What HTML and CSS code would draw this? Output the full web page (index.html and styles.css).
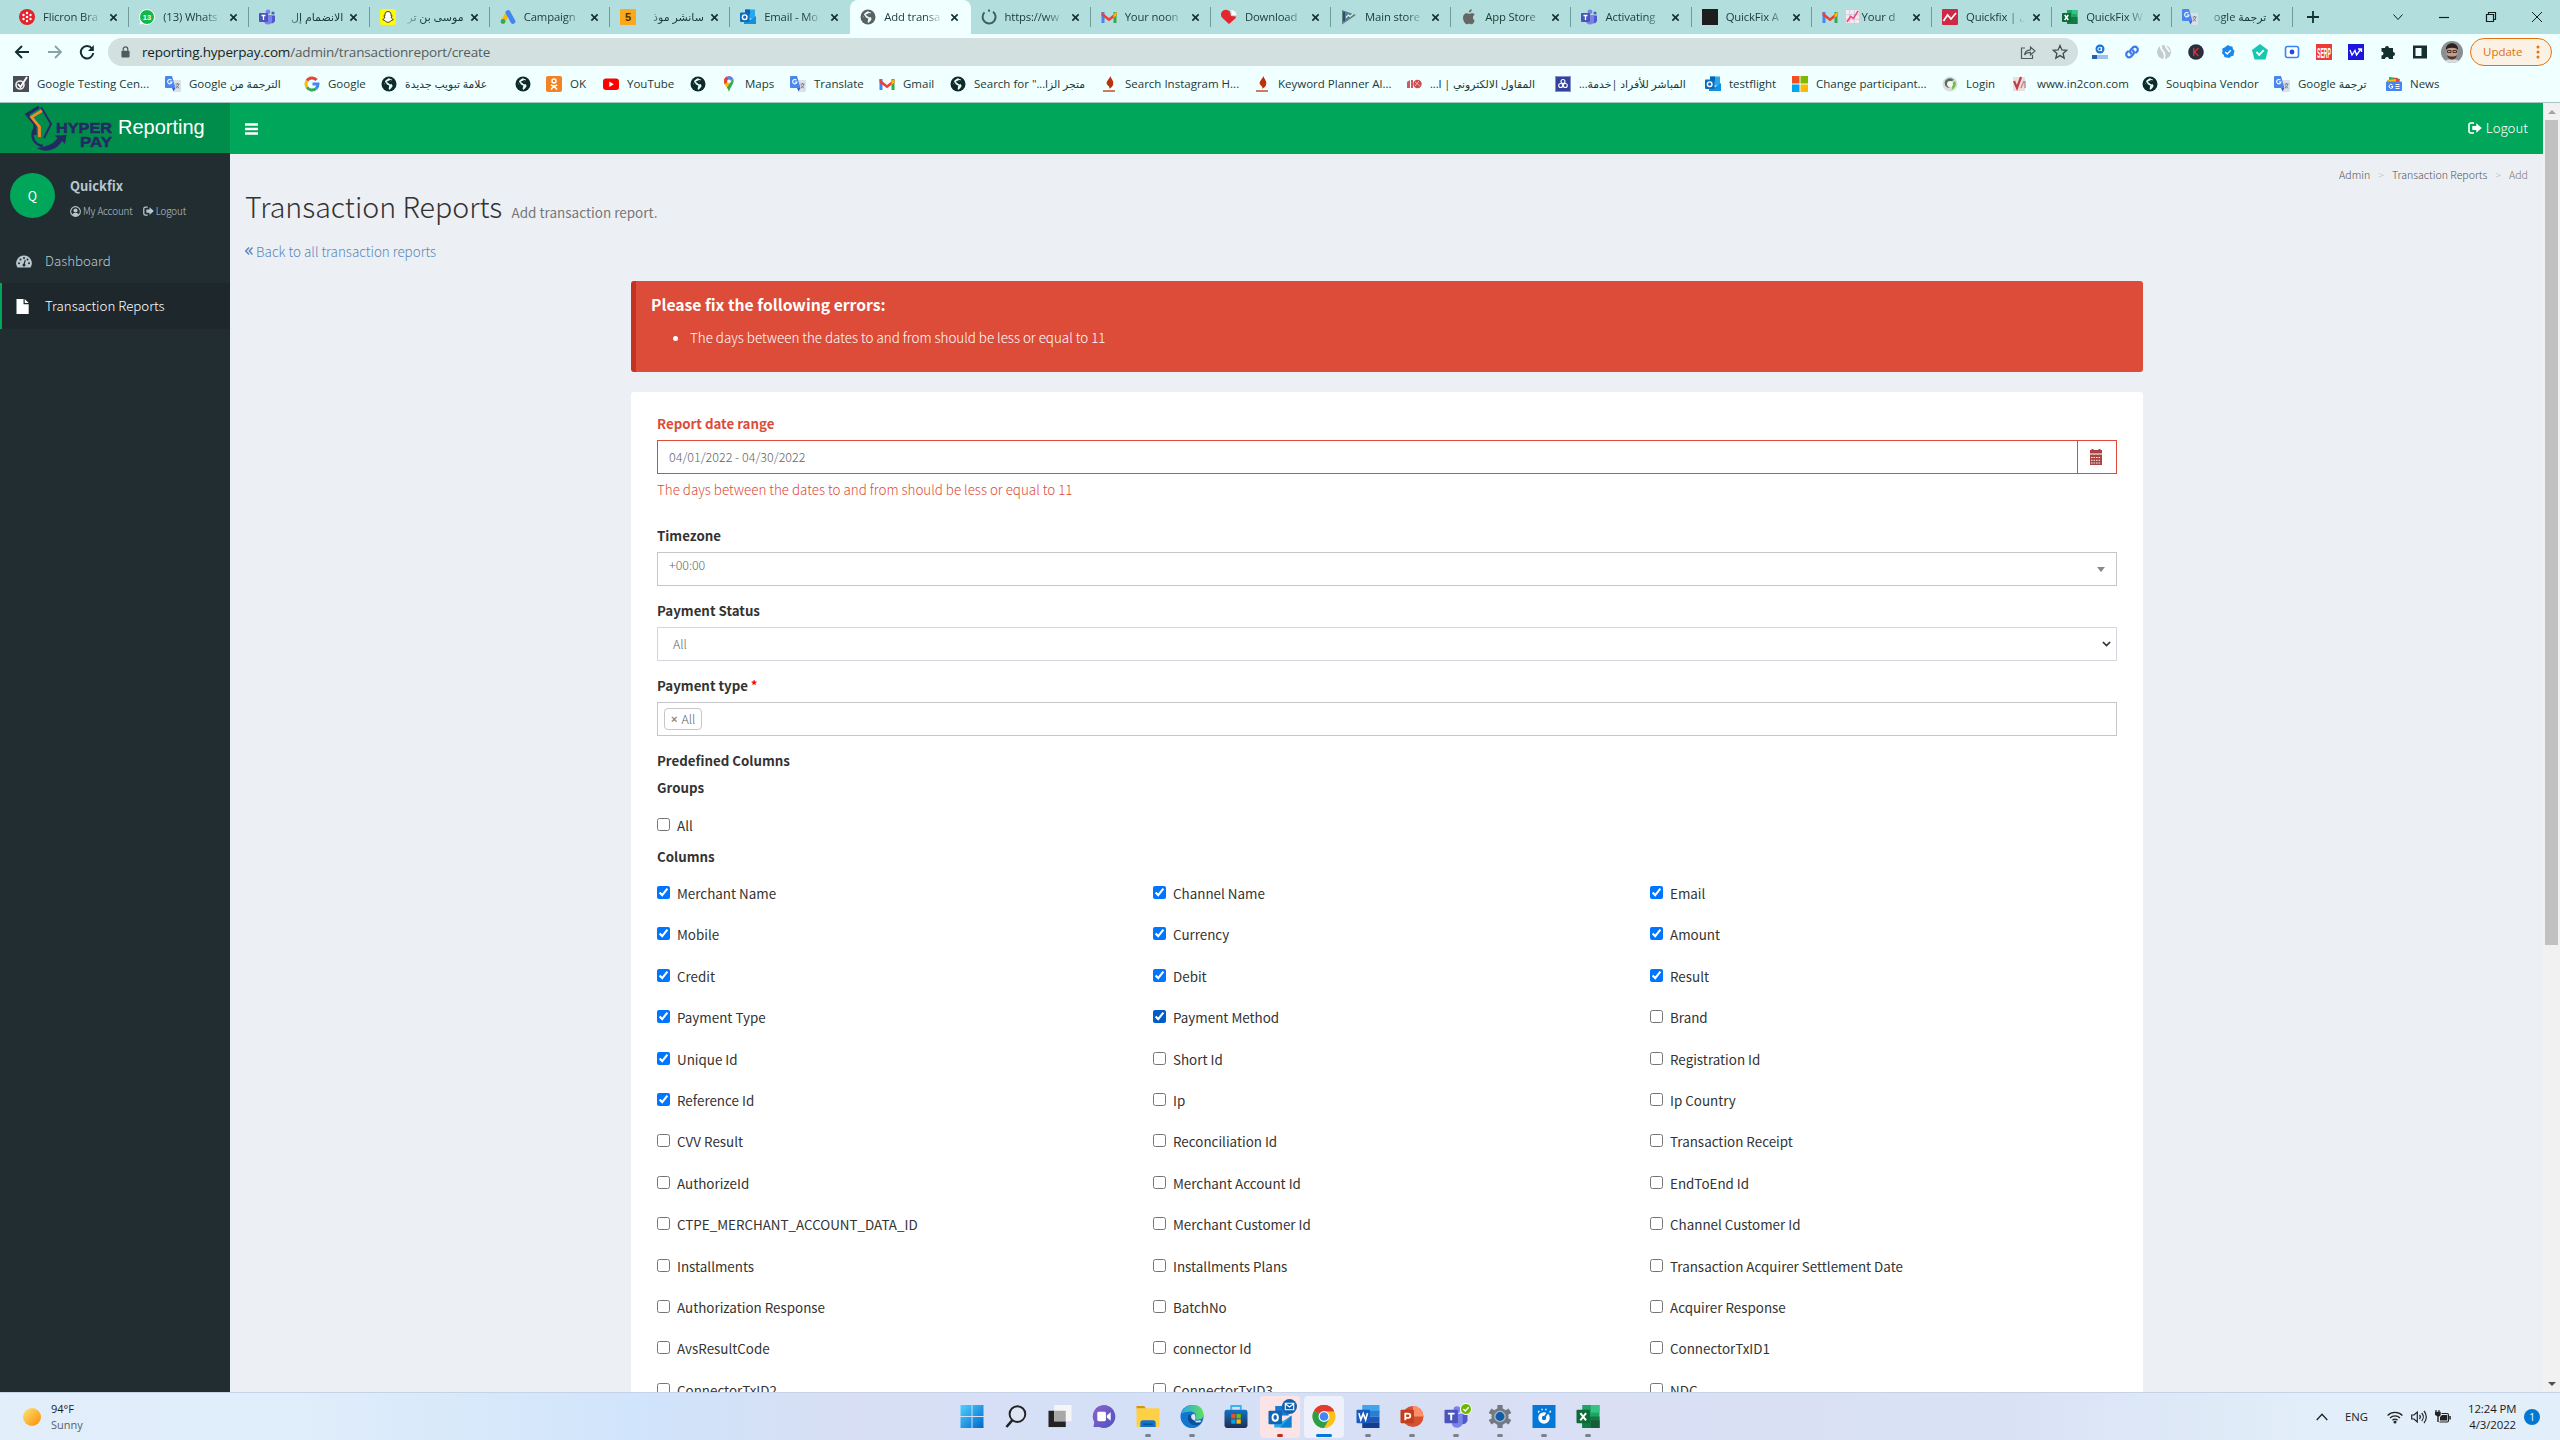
FILE: index.html
```html
<!DOCTYPE html>
<html lang="en">
<head>
<meta charset="utf-8">
<title>Add transaction report</title>
<link rel="stylesheet" href="styles.css">
</head>
<body>
<svg class="defs" width="0" height="0">
  <defs>
    <linearGradient id="gwin" x1="0" y1="0" x2="1" y2="1"><stop offset="0" stop-color="#4fd0ff"/><stop offset="1" stop-color="#0067c8"/></linearGradient>
    <linearGradient id="gedge" x1="0" y1="0" x2="1" y2="0"><stop offset="0" stop-color="#2aa9e8"/><stop offset="1" stop-color="#5ee05a"/></linearGradient>
    <linearGradient id="gstore" x1="0" y1="0" x2="0" y2="1"><stop offset="0" stop-color="#1473c4"/><stop offset="1" stop-color="#1d2f52"/></linearGradient>
    <linearGradient id="gchat" x1="0" y1="0" x2="1" y2="1"><stop offset="0" stop-color="#8b62c9"/><stop offset="1" stop-color="#5052c4"/></linearGradient>
    <linearGradient id="gsun" x1="0" y1="0" x2="1" y2="1"><stop offset="0.1" stop-color="#fddc6a"/><stop offset="1" stop-color="#fb8c00"/></linearGradient>
  </defs>
  <symbol id="globe" viewBox="0 0 16 16"><circle cx="8" cy="8" r="7.500" fill="currentColor"/><path d="M7.500 2.200L11 3.500 9.500 5.500 7 6l1 1.500 2.500.500 1.200 2-1.700 2.500L8 14l-.5-2.500 1-1.800L6 8.500 3 8l1.500-3.500z" fill="#e9fbf9"/><path d="M2 5.500l2.500 1.800 1 2.700L7.500 12M10 4.500l-3 1.300 3 2.200" stroke="currentColor" fill="none" stroke-width="1.500"/></symbol>
  <symbol id="teams" viewBox="0 0 16 16"><circle cx="9" cy="2.800" r="2.400" fill="#7b83eb"/><circle cx="14" cy="4" r="1.600" fill="#5059c9"/><path d="M11 6.500h5v5a3 3 0 0 1-4 2.600z" fill="#5059c9"/><path d="M5 6h8v5.500a4 4 0 0 1-8 0z" fill="#7b83eb"/><rect y="4" width="9" height="9" rx="1" fill="#4b53bc"/><path d="M2.500 6.500h4M4.500 6.500v4.500" stroke="#fff" stroke-width="1.300"/></symbol>
  <symbol id="outlook" viewBox="0 0 16 16"><rect x="5" y="0.500" width="10" height="9" fill="#28a8ea"/><rect x="5" y="0.500" width="5" height="5" fill="#0364b8"/><path d="M4 7l6 4 6-4v8H4z" fill="#1490df"/><rect y="3.500" width="9.500" height="9.500" rx="1" fill="#0f6cbd"/><circle cx="4.700" cy="8.200" r="2.300" fill="none" stroke="#fff" stroke-width="1.400"/></symbol>
  <symbol id="gmail" viewBox="0 0 16 16"><path d="M0.500 3h3v11h-3z" fill="#4285f4"/><path d="M12.500 3h3v11h-3z" fill="#34a853"/><path d="M0.500 3l7.500 6 7.500-6v3.500L8 12.300 0.500 6.500z" fill="#ea4335"/><path d="M12.500 5.200l3-2.400v3.700l-3 2.400z" fill="#fbbc04"/></symbol>
  <symbol id="translate" viewBox="0 0 16 16"><path d="M7 4h8a1 1 0 0 1 1 1v10a1 1 0 0 1-1 1H9z" fill="#dde1e6"/><path d="M1 0h6l3.500 12H1a1 1 0 0 1-1-1V1a1 1 0 0 1 1-1z" fill="#4a86ee"/><path d="M7 12h3.500L8.500 15.500z" fill="#3a62c0"/><path d="M6.500 4.200A2.200 2.200 0 1 0 7 6H4.800" fill="none" stroke="#fff" stroke-width="1.100"/><path d="M10.500 8h4M12.500 7v1M11 12c2-1 2.500-2.500 2.700-4M11 9.200c.6 1.200 1.700 2.300 3.200 3" fill="none" stroke="#6b7b8c" stroke-width=".9"/></symbol>
  <symbol id="excel" viewBox="0 0 16 16"><path d="M5 1h10.500v14H5z" fill="#21a366"/><path d="M5 8h10.500v7H5z" fill="#107c41"/><path d="M10 1h5.500v4H10z" fill="#33c481"/><rect y="4" width="9" height="9" rx="1" fill="#0e6b38"/><path d="M2.700 6l3.600 5M6.300 6l-3.600 5" stroke="#fff" stroke-width="1.500"/></symbol>
  <symbol id="flame" viewBox="0 0 16 16"><path d="M9.500 0c.5 3 3 4 2.800 7.500C12.100 10.500 10 12 8 12.800 9 11 8 10.400 6.500 9 4 6.500 7.500 4 9.500 0z" fill="#bb3208"/><path d="M2 15h12" stroke="#bb3208" stroke-width="1.300"/></symbol>
  <symbol id="x" viewBox="0 0 10 10"><path d="M1.500 1.500l7 7M8.500 1.500l-7 7" stroke="#12312f" stroke-width="1.800"/></symbol>
  <symbol id="signout" viewBox="0 0 14 13"><path d="M6 1H3a2 2 0 0 0-2 2v6a2 2 0 0 0 2 2h3" fill="none" stroke="currentColor" stroke-width="1.600"/><path d="M4.300 4h4V1.200L13.800 6 8.300 10.800V8h-4z" fill="currentColor"/></symbol>
</svg>

<header class="browser">
  <div class="tabs">
    <div class="tab"><svg class="ic" viewBox="0 0 16 16"><circle cx="8" cy="8" r="8" fill="#e5222b"/><g fill="#fff"><circle cx="8" cy="8" r="1.300"/><circle cx="8" cy="4" r="1.200"/><circle cx="8" cy="12" r="1.200"/><circle cx="4.500" cy="6" r="1.200"/><circle cx="4.500" cy="10" r="1.200"/><circle cx="11.500" cy="6" r="1.200"/><circle cx="11.500" cy="10" r="1.200"/></g></svg><span class="title">Flicron Bra</span><svg class="close"><use href="#x"/></svg></div>
    <div class="tab"><svg class="ic" viewBox="0 0 16 16"><circle cx="8" cy="8" r="7.500" fill="#12b84a" stroke="#fff"/><path d="M0.500 15.500l1-4 3 3z" fill="#fff"/><text x="8" y="10.800" text-anchor="middle" class="badge13">13</text></svg><span class="title">(13) Whats</span><svg class="close"><use href="#x"/></svg></div>
    <div class="tab"><svg class="ic"><use href="#teams"/></svg><span class="title rtl">الانضمام إل</span><svg class="close"><use href="#x"/></svg></div>
    <div class="tab"><svg class="ic" viewBox="0 0 16 16"><rect width="16" height="16" rx="2.500" fill="#fffc00"/><path d="M8 2.500c3 0 3.200 2.500 3.100 4.300l1.200.3-1.200 1c.4 1.400 1.200 2 2.200 2.400-.6.900-1.600.7-2.200 1.200-1 .9-1.800 1.600-3.100 1.600s-2.100-.7-3.100-1.600c-.6-.5-1.600-.3-2.200-1.200 1-.4 1.800-1 2.200-2.400l-1.200-1 1.200-.3C4.800 5 5 2.500 8 2.500z" fill="#fff" stroke="#222" stroke-width=".9"/></svg><span class="title rtl">موسى بن تر</span><svg class="close"><use href="#x"/></svg></div>
    <div class="tab"><svg class="ic" viewBox="0 0 16 16"><path d="M8 3.500L3 12.500" stroke="#fbbc04" stroke-width="4.500"/><path d="M8 3.500l5 9" stroke="#4285f4" stroke-width="4.800" stroke-linecap="round"/><circle cx="3" cy="12.500" r="2.400" fill="#34a853"/></svg><span class="title">Campaign</span><svg class="close"><use href="#x"/></svg></div>
    <div class="tab"><svg class="ic" viewBox="0 0 16 16"><rect width="16" height="16" rx="1" fill="#fba81a"/><text x="8" y="12" text-anchor="middle" class="five">5</text></svg><span class="title rtl">سانشر موذ</span><svg class="close"><use href="#x"/></svg></div>
    <div class="tab"><svg class="ic"><use href="#outlook"/></svg><span class="title">Email - Mo</span><svg class="close"><use href="#x"/></svg></div>
    <div class="tab active"><svg class="ic gray"><use href="#globe"/></svg><span class="title">Add transa</span><svg class="close"><use href="#x"/></svg></div>
    <div class="tab"><svg class="ic" viewBox="0 0 16 16"><path d="M12 2.800a6.500 6.500 0 1 1-8.500.6M7 1.500l2 .2" fill="none" stroke="#3f5f5f" stroke-width="2"/></svg><span class="title">https://ww</span><svg class="close"><use href="#x"/></svg></div>
    <div class="tab"><svg class="ic"><use href="#gmail"/></svg><span class="title">Your noon</span><svg class="close"><use href="#x"/></svg></div>
    <div class="tab"><svg class="ic" viewBox="0 0 16 16"><path d="M8 15L1.500 9A4.500 4.500 0 0 1 8 2l1 .5L10 7l5 .5c0 1-.5 1.700-1 2.200z" fill="#e3262f"/><path d="M10 1.200c3 0 5.500 2 5.300 5L11 6z" fill="#fff"/></svg><span class="title">Download</span><svg class="close"><use href="#x"/></svg></div>
    <div class="tab"><svg class="ic" viewBox="0 0 16 16"><path d="M1 1l14 5-14 9.500z" fill="#5f7f8f"/><path d="M3 3v9" stroke="#2f4f6f" stroke-width="2"/><path d="M5 8.500L7.500 6l1.500 1.500L12 5" fill="none" stroke="#cfe" stroke-width="1.200"/></svg><span class="title">Main store</span><svg class="close"><use href="#x"/></svg></div>
    <div class="tab"><svg class="ic" viewBox="0 0 16 16"><path d="M10.800.3c.1 1.700-1.300 3.200-2.900 3.200C7.700 1.900 9.200.5 10.800.3zM13.700 11.800c-.8 1.900-1.900 3.500-3.100 3.500-.9 0-1.200-.5-2.300-.5s-1.500.5-2.300.5C4.300 15.300 2 11.800 2 8.800 2 6 3.800 4.300 5.700 4.300c1 0 1.800.6 2.500.6.700 0 1.600-.7 2.900-.7 1 0 2 .5 2.600 1.400-2.500 1.500-2 4.900 0 6.200z" fill="#666"/></svg><span class="title">App Store</span><svg class="close"><use href="#x"/></svg></div>
    <div class="tab"><svg class="ic"><use href="#teams"/></svg><span class="title">Activating</span><svg class="close"><use href="#x"/></svg></div>
    <div class="tab"><svg class="ic" viewBox="0 0 16 16"><rect width="16" height="16" fill="#1d1d20"/></svg><span class="title">QuickFix A</span><svg class="close"><use href="#x"/></svg></div>
    <div class="tab"><svg class="ic"><use href="#gmail"/></svg><span class="title"><svg class="chart" viewBox="0 0 14 14"><path d="M0 0h14v14H0z" fill="#fbe9ee"/><path d="M4 0v14M9 0v14M0 5h14M0 10h14" stroke="#bcc6da" stroke-width=".8"/><path d="M1 13l4-6 3 2 5-8" fill="none" stroke="#ec4a86" stroke-width="1.800"/></svg> Your d</span><svg class="close"><use href="#x"/></svg></div>
    <div class="tab"><svg class="ic" viewBox="0 0 16 16"><rect width="16" height="16" rx="1" fill="#ce2a45"/><path d="M1.500 12l4-6 3.500 4L14 4" fill="none" stroke="#fff" stroke-width="1.700"/></svg><span class="title">Quickfix | ل</span><svg class="close"><use href="#x"/></svg></div>
    <div class="tab"><svg class="ic"><use href="#excel"/></svg><span class="title">QuickFix W</span><svg class="close"><use href="#x"/></svg></div>
    <div class="tab"><svg class="ic"><use href="#translate"/></svg><span class="title rtl">ترجمة <bdi>ogle</bdi></span><svg class="close"><use href="#x"/></svg></div>
    <svg class="newtab" viewBox="0 0 12 12"><path d="M6 0v12M0 6h12" stroke="#12312f" stroke-width="1.800"/></svg>
    <div class="winctl">
      <svg viewBox="0 0 12 12"><path d="M1.500 3.500L6 8.500l4.500-5" fill="none" stroke="#12211f"/></svg>
      <svg viewBox="0 0 12 12"><path d="M1 6.500h10" stroke="#12211f" stroke-width="1.200"/></svg>
      <svg viewBox="0 0 12 12"><path d="M1.500 3.500h7v7h-7zM3.500 3.500v-2h7v7h-2" fill="none" stroke="#12211f" stroke-width="1.200"/></svg>
      <svg viewBox="0 0 12 12"><path d="M1 1l10 10M11 1L1 11" stroke="#12211f"/></svg>
    </div>
  </div>

  <div class="toolbar">
    <div class="nav">
      <svg viewBox="0 0 16 16"><path d="M15 8H2.500M8 2L2 8l6 6" fill="none" stroke="#13302e" stroke-width="2"/></svg>
      <svg viewBox="0 0 16 16"><path d="M1 8h12.500M8 2l6 6-6 6" fill="none" stroke="#8ba3a3" stroke-width="1.800"/></svg>
      <svg viewBox="0 0 16 16"><path d="M13 4.500A6.200 6.200 0 1 0 14.200 9" fill="none" stroke="#13302e" stroke-width="2"/><path d="M14.800 1v6H9z" fill="#13302e"/></svg>
    </div>
    <div class="omnibox">
      <svg class="lock" viewBox="0 0 10 13"><rect x=".5" y="5" width="9" height="7.500" rx="1" fill="#4e5d5c"/><path d="M2.500 5V3.300a2.500 2.500 0 0 1 5 0V5" fill="none" stroke="#4e5d5c" stroke-width="1.400"/></svg>
      <span class="url"><b>reporting.hyperpay.com</b>/admin/transactionreport/create</span>
      <svg class="omni-ic" viewBox="0 0 16 16"><path d="M5 4H1.500v10.500h11V11" fill="none" stroke="#4e5d5c" stroke-width="1.200"/><path d="M4.500 11c.5-3.500 2.500-5 6-5.200V3L15 7l-4.500 4V8.300c-2.500 0-4.500.5-6 2.700z" fill="none" stroke="#4e5d5c" stroke-width="1.200"/></svg>
      <svg class="omni-ic" viewBox="0 0 16 16"><path d="M8 1.500l1.900 4.400 4.800.4-3.600 3.100 1.100 4.700L8 11.600l-4.200 2.500 1.100-4.700L1.300 6.300l4.800-.4z" fill="none" stroke="#3f4f4e" stroke-width="1.300"/></svg>
    </div>
    <div class="exts">
      <svg viewBox="0 0 16 16"><circle cx="8" cy="5" r="4.500" fill="#1a73d8"/><circle cx="7.600" cy="5" r="1.700" fill="none" stroke="#fff"/><path d="M9.600 3v4.200" stroke="#fff"/><path d="M0 11h16v4H0z" fill="#9cc2ea"/><path d="M0 11h5v4H0z" fill="#2a5da8"/></svg>
      <svg viewBox="0 0 16 16"><g fill="none" stroke="#3b78e7" stroke-width="2.200" stroke-linecap="round"><path d="M7 9.500a3 3 0 0 1 0-4L9.500 3a3 3 0 0 1 4 4L12 8.500"/><path d="M9 6.500a3 3 0 0 1 0 4L6.500 13a3 3 0 0 1-4-4L4 7.500"/></g></svg>
      <svg viewBox="0 0 16 16"><circle cx="8" cy="8" r="7" fill="#c4cccc"/><path d="M5 1.500c-1 4 2 5 3 7s1 4 0 6.500M9.500 1c0 3 3 4 4 7" fill="none" stroke="#f4ffff" stroke-width="1.800"/></svg>
      <svg viewBox="0 0 16 16"><circle cx="8" cy="8" r="7.800" fill="#2a2e3d"/><path d="M5.800 4v8M10.500 4l-4 4 4 4" fill="none" stroke="#e0323c" stroke-width="1.300"/></svg>
      <svg viewBox="0 0 16 16"><path d="M8 1l2 1.300 2.400.2.500 2.400L14.500 7l-.7 2.300-.3 2.400-2.400.6L9.300 14 7 13.500l-2.400-.2-.8-2.300L2 9.300 2.500 7 2.300 4.500l2.200-.9z" fill="#1a86f0"/><path d="M5.200 8l2 2 3.600-3.800" fill="none" stroke="#fff" stroke-width="1.500"/></svg>
      <svg viewBox="0 0 16 16"><path d="M8 0l8 6-2.500 9.500h-11L0 6z" fill="#15c9b0"/><path d="M4.500 8l2.700 2.800 4.500-4.600" fill="none" stroke="#fff" stroke-width="1.900"/></svg>
      <svg viewBox="0 0 16 16"><rect x="1.500" y="2.500" width="13" height="11" rx="2" fill="#fff" stroke="#3b82f6" stroke-width="1.600"/><circle cx="8" cy="8" r="2.400" fill="#1d4fd8"/></svg>
      <svg viewBox="0 0 16 16"><rect width="16" height="16" fill="#ee3a36"/><text x="8" y="13.500" text-anchor="middle" textLength="14" lengthAdjust="spacingAndGlyphs" class="serp">SERP</text></svg>
      <svg viewBox="0 0 16 16"><rect width="16" height="16" fill="#1b16dd"/><path d="M2 6l2 5 3-4.500L8.500 11 13 5M10 5h3.500v3" fill="none" stroke="#fff" stroke-width="1.300"/></svg>
      <svg viewBox="0 0 16 16"><path d="M1.500 4H5a2 2 0 1 1 4 0h4v4a2 2 0 1 1 0 4v3H9a2 2 0 0 0-4 0H1.500v-3.500a2 2 0 0 0 0-4z" fill="#13302e"/></svg>
      <svg viewBox="0 0 16 16"><rect x="1" y="1.500" width="14" height="13" fill="#13302e"/><rect x="3.500" y="4" width="6" height="8" fill="#f0ffff"/></svg>
    </div>
    <svg class="me" viewBox="0 0 22 22"><clipPath id="mc"><circle cx="11" cy="11" r="11"/></clipPath><g clip-path="url(#mc)"><rect width="22" height="22" fill="#8b8f92"/><path d="M2 22c1-5 17-5 18 0z" fill="#d9dcdf"/><ellipse cx="11" cy="11" rx="5.500" ry="7.500" fill="#c99a80"/><path d="M5 9c-1-9 13-9 12 0-2-3-10-3-12 0z" fill="#2c2320"/><path d="M6 14c1 6 9 6 10 0-2 2-8 2-10 0z" fill="#4a3730"/><path d="M6.500 9.500h3.500v2H6.500zM12 9.500h3.500v2H12z" fill="none" stroke="#222" stroke-width=".8"/></g></svg>
    <div class="update">Update<svg viewBox="0 0 4 16"><g fill="#e8710a"><circle cx="2" cy="3" r="1.500"/><circle cx="2" cy="8" r="1.500"/><circle cx="2" cy="13" r="1.500"/></g></svg></div>
  </div>

  <div class="bookmarks">
    <a><svg class="ic" viewBox="0 0 16 16"><path d="M0 0h16v16H0z" fill="#4a4d55"/><circle cx="7" cy="9" r="4" fill="none" stroke="#eee" stroke-width="1.600"/><path d="M5 8l2.500 3L14 1" fill="none" stroke="#fff" stroke-width="1.800"/></svg>Google Testing Cen...</a>
    <a><svg class="ic"><use href="#translate"/></svg><span dir="rtl"><i>الترجمة من</i> Google</span></a>
    <a><svg class="ic" viewBox="0 0 16 16"><g fill="none" stroke-width="3"><path d="M12.600 4A6 6 0 0 0 3 4.800" stroke="#ea4335"/><path d="M3 4.800a6 6 0 0 0 0 6.400" stroke="#fbbc05"/><path d="M3 11.200a6 6 0 0 0 9 1.400" stroke="#34a853"/><path d="M12 12.600A6 6 0 0 0 14 8H8.500" stroke="#4285f4"/></g></svg>Google</a>
    <a><svg class="ic"><use href="#globe"/></svg><span dir="rtl"><i>علامة تبويب جديدة</i></span></a>
    <a><svg class="ic"><use href="#globe"/></svg></a>
    <a><svg class="ic" viewBox="0 0 16 16"><rect width="16" height="16" rx="2" fill="#f58220"/><circle cx="8" cy="5" r="2" fill="none" stroke="#fff" stroke-width="1.500"/><path d="M4.800 8.800c2 1.300 4.400 1.300 6.400 0M8 10l-3 3.500M8 10l3 3.500" fill="none" stroke="#fff" stroke-width="1.500"/></svg>OK</a>
    <a><svg class="ic" viewBox="0 0 16 16"><rect y="2.500" width="16" height="11.500" rx="3" fill="#f00"/><path d="M6.300 5.500v5.500l4.500-2.700z" fill="#fff"/></svg>YouTube</a>
    <a><svg class="ic"><use href="#globe"/></svg></a>
    <a><svg class="ic" viewBox="0 0 16 16"><path d="M3.300 3.500C4.500 0 10 -1 12 2.500L8 6z" fill="#ea4335"/><path d="M3.300 3.300A5 5 0 0 1 6 .6L8 5.500 4 9C3 7.500 2.500 5.500 3.300 3.300z" fill="#e94235"/><path d="M3.600 8.500L8 4.500l2 2L5.800 11.500z" fill="#fbbc04"/><path d="M8 .2A5 5 0 0 1 12.300 2.700L9 6.500 5.800 1z" fill="#4a8af4"/><path d="M12.300 2.700C14 7 9 11 8 16 7.500 14 6.800 12.800 5.800 11.500z" fill="#34a853"/><circle cx="8" cy="5.300" r="1.800" fill="#fff"/></svg>Maps</a>
    <a><svg class="ic"><use href="#translate"/></svg>Translate</a>
    <a><svg class="ic"><use href="#gmail"/></svg>Gmail</a>
    <a><svg class="ic"><use href="#globe"/></svg><span>Search for "<bdi dir="rtl"><i>متجر الزا...</i></bdi></span></a>
    <a><svg class="ic"><use href="#flame"/></svg>Search Instagram H...</a>
    <a><svg class="ic"><use href="#flame"/></svg>Keyword Planner Al...</a>
    <a><svg class="ic" viewBox="0 0 16 16"><path d="M1 12V6l3-2v8zM5 4h2v8H5z" fill="#d8565a"/><circle cx="11.500" cy="8" r="4.200" fill="#cf4a50"/><path d="M9 6l5 4M9 10l4-5" stroke="#f5c8c8" stroke-width=".8"/></svg><span dir="rtl"><i>المقاول الالكتروني | ا...</i></span></a>
    <a><svg class="ic" viewBox="0 0 16 16"><rect x=".5" y=".5" width="15" height="15" fill="#33429b" stroke="#8791cc"/><g fill="none" stroke="#fff" stroke-width="1.100"><circle cx="8" cy="5.500" r="2"/><circle cx="5.700" cy="9.500" r="2"/><circle cx="10.300" cy="9.500" r="2"/></g></svg><span dir="rtl"><i>المباشر للأفراد |خدمة...</i></span></a>
    <a><svg class="ic"><use href="#outlook"/></svg>testflight</a>
    <a><svg class="ic" viewBox="0 0 16 16"><path d="M0 0h7.500v7.500H0z" fill="#f25022"/><path d="M8.500 0H16v7.500H8.500z" fill="#7fba00"/><path d="M0 8.500h7.500V16H0z" fill="#00a4ef"/><path d="M8.500 8.500H16V16H8.500z" fill="#ffb900"/></svg>Change participant...</a>
    <a><svg class="ic" viewBox="0 0 16 16"><circle cx="8" cy="8" r="7.500" fill="#d9dedb"/><path d="M3 5c2-3 6-4 9-1l-4 2c-3 2-2 5 0 6-4 0-6-3-5-7z" fill="#5d6b60"/><path d="M13 5c2 4 0 7-3.500 9 1-3 1-4-1-6z" fill="#6abf4b"/><circle cx="8" cy="8" r="3" fill="#f2f7f2"/></svg>Login</a>
    <a><svg class="ic" viewBox="0 0 16 16"><rect y="1" width="12" height="14" fill="#eadedf"/><path d="M1 5l3 7 4-11" fill="none" stroke="#c73b45" stroke-width="2.200"/><path d="M8 12l3-7M12 12V5" stroke="#b9898c" stroke-width="1.400"/></svg>www.in2con.com</a>
    <a><svg class="ic"><use href="#globe"/></svg>Souqbina Vendor</a>
    <a><svg class="ic"><use href="#translate"/></svg><span dir="rtl"><i>ترجمة</i> Google</span></a>
    <a><svg class="ic" viewBox="0 0 16 16"><path d="M3 1l9 1v6H3z" fill="#34a853"/><path d="M8 2l6 1-1 5H8z" fill="#ea4335"/><path d="M1 4l9-1v5H1z" fill="#fbbc04"/><rect y="5.500" width="16" height="9.500" rx="1" fill="#4285f4"/><path d="M6.500 9A2 2 0 1 0 7 10.500H5.200M9.500 8.500h4M9.500 10.500h4M9.500 12.500h4" fill="none" stroke="#fff" stroke-width="1"/></svg>News</a>
  </div>
</header>

<div class="page">
  <aside class="sidebar">
    <div class="brand">
      <svg viewBox="0 0 96 50"><path d="M22 4L10 11.500l8 9.500v11" fill="none" stroke="#232a63" stroke-width="3.200"/><path d="M26 7L14.500 14l8 10v10" fill="none" stroke="#f08a2c" stroke-width="2.800"/><path d="M24 4l10 17-7 14" fill="none" stroke="#232a63" stroke-width="2"/><path d="M18 25c-6 9 0 17 8 18" fill="none" stroke="#232a63" stroke-width="2.500"/><path d="M20 45c9 6 21 1 25-7l3 3 1.500-9-12 .5 3 2.500c-4 6-9 8-20.500 10z" fill="#232a63"/><text x="39" y="29.500" textLength="56" lengthAdjust="spacingAndGlyphs" class="hp">HYPER</text><text x="63" y="43.500" textLength="32" lengthAdjust="spacingAndGlyphs" class="hp">PAY</text></svg>
      <span>Reporting</span>
    </div>
    <div class="user">
      <div class="avatar">Q</div>
      <div>
        <p class="name">Quickfix</p>
        <p class="links"><svg viewBox="0 0 12 12"><circle cx="6" cy="6" r="5.300" fill="none" stroke="currentColor" stroke-width="1.200"/><circle cx="6" cy="4.800" r="2.200" fill="currentColor"/><path d="M2.300 9.500c.8-3 6.600-3 7.400 0C8 11.500 4 11.500 2.300 9.500z" fill="currentColor"/></svg><span>My Account</span><svg class="so"><use href="#signout"/></svg><span>Logout</span></p>
      </div>
    </div>
    <nav>
      <a><svg viewBox="0 0 16 14"><path d="M8 1a7.800 7.800 0 0 0-6.600 12h13.200A7.800 7.800 0 0 0 8 1z" fill="currentColor"/><g fill="#222d32"><circle cx="3" cy="8.800" r="1"/><circle cx="4.500" cy="5" r="1"/><circle cx="8" cy="3.500" r="1"/><circle cx="11.500" cy="5" r="1"/><circle cx="13" cy="8.800" r="1"/><circle cx="8" cy="10.500" r="1.500"/></g><path d="M8 10.500l1.200-5" stroke="#222d32" stroke-width="1.100"/></svg>Dashboard</a>
      <a class="current"><svg viewBox="0 0 16 16"><path d="M0 0h7.500v5.500H13V16H0z" fill="#fff"/><path d="M8.700 0L13 4.300H8.700z" fill="#fff"/></svg>Transaction Reports</a>
    </nav>
  </aside>

  <div class="main">
    <div class="topbar">
      <svg class="burger" viewBox="0 0 13 12"><path d="M0 1.500h13M0 6h13M0 10.500h13" stroke="#fff" stroke-width="2.300"/></svg>
      <span class="logout"><svg><use href="#signout"/></svg>Logout</span>
    </div>
    <div class="content">
      <div class="crumbs"><span>Admin</span><em>&gt;</em><span>Transaction Reports</span><em>&gt;</em><span class="last">Add</span></div>
      <h1>Transaction Reports <small>Add transaction report.</small></h1>
      <a class="back"><svg viewBox="0 0 8 8"><path d="M4 .5L.8 4 4 7.500M7.500 .5L4.300 4l3.200 3.500" fill="none" stroke="currentColor" stroke-width="1.400"/></svg>Back to all transaction reports</a>

      <div class="column">
        <div class="alert">
          <h4>Please fix the following errors:</h4>
          <ul><li>The days between the dates to and from should be less or equal to 11</li></ul>
        </div>
        <form class="card">
          <div class="group error">
            <label>Report date range</label>
            <div class="field date"><span>04/01/2022 - 04/30/2022</span><div class="addon"><svg viewBox="0 0 14 16"><path d="M1 1h1.500V0h2v1h5V0h2v1H13v3.500H1z" fill="#a94442"/><path d="M1 5.500h12V16H1z" fill="#a94442"/><path d="M2 8.500h10M2 11.300h10M2 14h10" stroke="#fff" stroke-width=".9" stroke-dasharray="1.600 .9"/></svg></div></div>
            <p class="help">The days between the dates to and from should be less or equal to 11</p>
          </div>
          <div class="group">
            <label>Timezone</label>
            <div class="field tz"><span>+00:00</span><i class="caret"></i></div>
          </div>
          <div class="group">
            <label>Payment Status</label>
            <div class="field status"><span>All</span><svg viewBox="0 0 10 8"><path d="M1 1.800l4 4 4-4" fill="none" stroke="#333" stroke-width="1.900"/></svg></div>
          </div>
          <div class="group">
            <label>Payment type <sup>*</sup></label>
            <div class="field multi"><span class="tag"><b>×</b>All</span></div>
          </div>
          <label class="h">Predefined Columns</label>
          <label class="h groups">Groups</label>
          <div class="check all"><input type="checkbox">All</div>
          <label class="h cols">Columns</label>
          <div class="grid">
            <div class="check"><input type="checkbox" checked>Merchant Name</div>
            <div class="check"><input type="checkbox" checked>Channel Name</div>
            <div class="check"><input type="checkbox" checked>Email</div>
            <div class="check"><input type="checkbox" checked>Mobile</div>
            <div class="check"><input type="checkbox" checked>Currency</div>
            <div class="check"><input type="checkbox" checked>Amount</div>
            <div class="check"><input type="checkbox" checked>Credit</div>
            <div class="check"><input type="checkbox" checked>Debit</div>
            <div class="check"><input type="checkbox" checked>Result</div>
            <div class="check"><input type="checkbox" checked>Payment Type</div>
            <div class="check"><input class="hovered" type="checkbox" checked>Payment Method</div>
            <div class="check"><input type="checkbox">Brand</div>
            <div class="check"><input type="checkbox" checked>Unique Id</div>
            <div class="check"><input type="checkbox">Short Id</div>
            <div class="check"><input type="checkbox">Registration Id</div>
            <div class="check"><input type="checkbox" checked>Reference Id</div>
            <div class="check"><input type="checkbox">Ip</div>
            <div class="check"><input type="checkbox">Ip Country</div>
            <div class="check"><input type="checkbox">CVV Result</div>
            <div class="check"><input type="checkbox">Reconciliation Id</div>
            <div class="check"><input type="checkbox">Transaction Receipt</div>
            <div class="check"><input type="checkbox">AuthorizeId</div>
            <div class="check"><input type="checkbox">Merchant Account Id</div>
            <div class="check"><input type="checkbox">EndToEnd Id</div>
            <div class="check"><input type="checkbox">CTPE_MERCHANT_ACCOUNT_DATA_ID</div>
            <div class="check"><input type="checkbox">Merchant Customer Id</div>
            <div class="check"><input type="checkbox">Channel Customer Id</div>
            <div class="check"><input type="checkbox">Installments</div>
            <div class="check"><input type="checkbox">Installments Plans</div>
            <div class="check"><input type="checkbox">Transaction Acquirer Settlement Date</div>
            <div class="check"><input type="checkbox">Authorization Response</div>
            <div class="check"><input type="checkbox">BatchNo</div>
            <div class="check"><input type="checkbox">Acquirer Response</div>
            <div class="check"><input type="checkbox">AvsResultCode</div>
            <div class="check"><input type="checkbox">connector Id</div>
            <div class="check"><input type="checkbox">ConnectorTxID1</div>
            <div class="check"><input type="checkbox">ConnectorTxID2</div>
            <div class="check"><input type="checkbox">ConnectorTxID3</div>
            <div class="check"><input type="checkbox">NDC</div>
          </div>
        </form>
      </div>
    </div>
  </div>

  <div class="scrollbar"><i class="up"></i><div class="thumb"></div><i class="down"></i></div>
</div>

<footer class="taskbar">
  <div class="weather"><svg viewBox="0 0 20 20"><circle cx="10" cy="10" r="9" fill="url(#gsun)"/></svg><div>94°F<br><span>Sunny</span></div></div>
  <div class="apps">
    <div class="app"><svg viewBox="0 0 24 24"><path d="M0 0h11.500v11.500H0zM12.500 0H24v11.500H12.500zM0 12.500h11.500V24H0zM12.500 12.500H24V24H12.500z" fill="url(#gwin)"/></svg></div>
    <div class="app"><svg viewBox="0 0 24 24"><circle cx="13.500" cy="9.500" r="8.200" fill="#dfe6f3" stroke="#222" stroke-width="2"/><path d="M8 16l-6 7" stroke="#222" stroke-width="2.600"/></svg></div>
    <div class="app"><svg viewBox="0 0 24 24"><rect y="6" width="18" height="17" fill="#232323"/><rect x="6" width="18" height="17" fill="#f5f5f5"/><rect x="6" y="6" width="12" height="11" fill="#a8a8a8"/></svg></div>
    <div class="app"><svg viewBox="0 0 24 24"><path d="M12 0a12 12 0 1 1-5 23H1l.8-5A12 12 0 0 1 12 0z" fill="url(#gchat)"/><rect x="5" y="7" width="9" height="10" rx="1.500" fill="#fff"/><path d="M15 11l4-3.500v9L15 13z" fill="#fff"/></svg></div>
    <div class="app run"><svg viewBox="0 0 24 24"><path d="M0 1h8l2 3h-10z" fill="#d9940a"/><rect y="3.500" width="24" height="19.500" rx="1" fill="#ffcf45"/><path d="M4 23v-4a3 3 0 0 1 3-3h10a3 3 0 0 1 3 3v4z" fill="#1173c9"/><path d="M7 20h10" stroke="#0a4f94" stroke-width="1.500"/></svg></div>
    <div class="app run"><svg viewBox="0 0 24 24"><circle cx="12" cy="12" r="12" fill="#1376ce"/><path d="M1 9C4-3 24-3 24 10c0 5-5 6-9 5 4-4-1-9-6-8-4 0-6 1-8 2z" fill="url(#gedge)"/><path d="M9 9c-4 6 1 13 8 12 3-.5 4.500-2 5.500-3.500-3 1-6 .5-8-1C11 14.500 11 11 9 9z" fill="#0c4d94"/><path d="M15 15c1-1.500 1-4-.500-5.500C12 8.500 10 12 12 14.500c2 2 5 2.500 9 1.500v2l-5 .2z" fill="#dfe7f6"/></svg></div>
    <div class="app"><svg viewBox="0 0 24 24"><path d="M7 5V1h10v4" fill="none" stroke="#35b5f1" stroke-width="2"/><rect y="5" width="24" height="19" rx="2.500" fill="url(#gstore)"/><path d="M7 9.500h4.500V14H7z" fill="#f25022"/><path d="M12.500 9.500H17V14h-4.500z" fill="#7fba00"/><path d="M7 15h4.500v4.500H7z" fill="#00a4ef"/><path d="M12.500 15H17v4.500h-4.500z" fill="#ffb900"/></svg></div>
    <div class="app run alerted"><svg viewBox="0 0 24 24"><path d="M7 1h14v10H7z" fill="#1a78cf"/><path d="M6 11l9 6 9-6v12.500H6z" fill="#28a8ea"/><path d="M24 11L12 23.500h12z" fill="#1081d0"/><rect y="6" width="14" height="14" rx="1" fill="#0f64b4"/><ellipse cx="7" cy="13" rx="2.800" ry="3.500" fill="none" stroke="#fff" stroke-width="2"/></svg><svg class="mail" viewBox="0 0 16 16"><circle cx="8" cy="8" r="8" fill="#0f5fae"/><path d="M3.500 4.500h9v7h-9zM3.500 5l4.500 3.500L12.500 5" fill="none" stroke="#fff" stroke-width="1.200"/></svg></div>
    <div class="app run open"><svg viewBox="0 0 24 24"><circle cx="12" cy="12" r="12" fill="#fbc116"/><path d="M12 12L1.600 6A12 12 0 0 1 22.400 6z" fill="#e33b2e"/><path d="M12 12L1.600 6A12 12 0 0 0 12 24l5-9z" fill="#2a9e48"/><path d="M12 6.500h10.700L17 15z" fill="#fbc116"/><path d="M2 5.500A12 12 0 0 1 22.700 6.500H12z" fill="#e33b2e"/><circle cx="12" cy="12" r="5.700" fill="#fff"/><circle cx="12" cy="12" r="4.500" fill="#4285f4"/></svg></div>
    <div class="app run"><svg viewBox="0 0 24 24"><path d="M6 0h18v8H6z" fill="#41a5ee"/><path d="M6 6h18v6H6z" fill="#2b7cd3"/><path d="M6 12h18v6H6z" fill="#185abd"/><path d="M6 18h18v6H6z" fill="#103f91"/><rect y="5" width="14" height="14" rx="1" fill="#185abd"/><path d="M2.500 8.500l2 7L7 9l2.500 6.500 2-7" fill="none" stroke="#fff" stroke-width="1.700"/></svg></div>
    <div class="app run"><svg viewBox="0 0 24 24"><circle cx="13" cy="12" r="11" fill="#d35230"/><path d="M13 1a11 11 0 0 1 11 11H13z" fill="#ff8f6b"/><rect y="5" width="14" height="14" rx="1" fill="#c43e1c"/><path d="M5 16V9h3a2.200 2.200 0 0 1 0 4.500H5" fill="none" stroke="#fff" stroke-width="1.900"/></svg></div>
    <div class="app run"><svg viewBox="0 0 24 24"><circle cx="13" cy="5" r="3.600" fill="#7b83eb"/><path d="M17 9h7v7a5 5 0 0 1-6 4z" fill="#5059c9"/><path d="M8 9h11v9a6 6 0 0 1-11 3z" fill="#7b83eb"/><rect y="5" width="14" height="14" rx="1" fill="#4b53bc"/><path d="M3.500 9h7M7 9v7" stroke="#fff" stroke-width="2"/></svg><svg class="ok" viewBox="0 0 12 12"><circle cx="6" cy="6" r="5.500" fill="#6bb700" stroke="#fff"/><path d="M3.300 6l2 2 3.400-3.700" fill="none" stroke="#fff" stroke-width="1.400"/></svg></div>
    <div class="app run"><svg viewBox="0 0 24 24"><g stroke="#737a82" stroke-width="5.500"><path d="M12 0v24M1.600 6l20.800 12M1.600 18L22.400 6"/></g><circle cx="12" cy="12" r="9" fill="#737a82"/><circle cx="12" cy="12" r="6" fill="#a9b4c0"/><circle cx="12" cy="12" r="4.600" fill="#0f5ca8"/></svg></div>
    <div class="app run"><svg viewBox="0 0 24 24"><rect width="24" height="24" fill="#0478d7"/><circle cx="12" cy="13.500" r="6" fill="#fff"/><path d="M12 13.500l4-6" stroke="#0478d7" stroke-width="2"/><circle cx="12" cy="13.500" r="2.300" fill="#0478d7"/><path d="M6 8l1-2M10 5.500V4M14 5.500V4M18 8l1-2" stroke="#fff" stroke-width="1.400"/></svg></div>
    <div class="app run"><svg viewBox="0 0 24 24"><path d="M6 0h18v24H6z" fill="#21a366"/><path d="M15 0h9v8h-9z" fill="#33c481"/><path d="M6 12h18v12H6z" fill="#107c41"/><path d="M15 16h9v8h-9z" fill="#185c37"/><rect y="5" width="14" height="14" rx="1" fill="#0e6b38"/><path d="M4 8.500l6 7.500M10 8.500L4 16" stroke="#fff" stroke-width="2.100"/></svg></div>
  </div>
  <div class="tray">
    <svg class="chev" viewBox="0 0 12 8"><path d="M.7 7L6 1.300 11.300 7" fill="none" stroke="#222" stroke-width="1.300"/></svg>
    <span class="lang">ENG</span>
    <svg class="sys" viewBox="0 0 16 14"><g fill="none" stroke="#222" stroke-width="1.200"><path d="M.6 5.500a10.500 10.500 0 0 1 14.800 0M3 8a7 7 0 0 1 10 0M5.400 10.300a3.800 3.800 0 0 1 5.200 0"/></g><circle cx="8" cy="12" r="1.500" fill="#222"/></svg>
    <svg class="sys" viewBox="0 0 16 14"><g fill="none" stroke="#222" stroke-width="1.200"><path d="M.7 5v4H3l3.300 3V2L3 5zM8.500 5a3 3 0 0 1 0 4M10.700 3a6 6 0 0 1 0 8M13 1a9 9 0 0 1 0 12"/></g></svg>
    <svg class="sys" viewBox="0 0 16 14"><path d="M1 0v3M4 0v3" stroke="#222" stroke-width="1.200"/><path d="M0 2.500h5v2.500L3 6.500v5.500" fill="none" stroke="#222" stroke-width="1.400"/><path d="M0 2.500h5v2.500L3 6.500 0 5z" fill="#222"/><path d="M6.500 3.500H12a1.500 1.500 0 0 1 1.500 1.500v5.500A1.500 1.500 0 0 1 12 12H4.500" fill="none" stroke="#222" stroke-width="1.200"/><path d="M5 7l2-2h5.200v5.500H5zM14.300 6h1.500v3.500h-1.500z" fill="#222"/></svg>
    <div class="clock">12:24 PM<br>4/3/2022</div>
    <span class="count">1</span>
  </div>
</footer>
</body>
</html>
```
FILE: styles.css
```css
* { box-sizing: border-box; }
body { margin: 0; width: 2560px; height: 1440px; overflow: hidden; display: flex; flex-direction: column; font: 13.400px/20px "Noto Sans CJK SC", sans-serif; color: #333; }
svg { display: block; flex: none; }
.defs { position: absolute; }
p, h1, h4, ul { margin: 0; padding: 0; font-weight: 400; }
.ic { width: 16px; height: 16px; color: #0c2b29; }
.ic.gray { color: #5a6161; }

/* Browser chrome */
.browser { height: 103px; flex: none; background: #f0ffff; border-bottom: 1px solid #a9c4c4; font: 11.500px/16px "Open Sans", "Noto Sans", "DejaVu Sans", sans-serif; color: #1a3a38; }
.tabs { height: 34px; background: #b2dfdd; display: flex; align-items: center; padding-left: 9px; }
.tab { width: 120.2px; height: 34px; display: flex; align-items: center; padding-left: 10px; position: relative; }
.tab::after { content: ""; width: 1px; height: 20px; background: #6c9b99; position: absolute; right: 0; top: 7px; }
.tab:nth-child(7)::after, .tab.active::after { display: none; }
.tab.active { background: #f0ffff; border-radius: 8px 8px 0 0; }
.title { width: 59px; margin: 0 7px 0 8px; white-space: nowrap; font-size: 11.300px; letter-spacing: -0.150px; -webkit-mask-image: linear-gradient(90deg, #000 70%, transparent); mask-image: linear-gradient(90deg, #000 70%, transparent); }
.title.rtl { direction: rtl; width: 60px; margin-right: 6px; font-size: 11px; letter-spacing: 0; -webkit-mask-image: linear-gradient(270deg, #000 70%, transparent); mask-image: linear-gradient(270deg, #000 70%, transparent); }
.close { width: 9px; height: 9px; }
.chart { width: 13px; height: 13px; display: inline-block; vertical-align: -2px; }
.badge13 { font: bold 7.500px "Liberation Sans", sans-serif; fill: #fff; }
.five { font: bold 11px "Liberation Sans", sans-serif; fill: #4a3000; }
.newtab { width: 12px; height: 12px; margin-left: 14px; }
.winctl { display: flex; gap: 34.300px; margin-left: auto; margin-right: 17px; }
.winctl svg { width: 12px; height: 12px; }
.toolbar { height: 36px; display: flex; align-items: center; }
.nav { display: flex; gap: 16.500px; width: 108px; padding-left: 14px; }
.nav svg { width: 16px; height: 16px; }
.omnibox { width: 1970px; height: 28px; border-radius: 14px; background: #d3e0e0; display: flex; align-items: center; padding-right: 10px; }
.lock { width: 9px; height: 12px; margin-left: 13px; }
.url { flex: 1; padding-left: 12px; font-size: 13.500px; letter-spacing: -0.170px; color: #51605f; }
.url b { font-weight: 400; color: #0f2625; }
.omni-ic { width: 16px; height: 16px; margin-left: 16px; }
.exts { display: flex; gap: 16px; margin-left: 14px; }
.exts svg { width: 16px; height: 16px; }
.serp { font: bold 14px "Liberation Sans", sans-serif; fill: #fff; }
.me { width: 22px; height: 22px; margin-left: 13px; }
.update { width: 82px; height: 28px; margin-left: 7px; border: 1px solid #e8710a; border-radius: 14px; background: #fbf1e4; color: #e0700e; font-size: 11.500px; font-weight: 500; display: flex; align-items: center; padding-left: 12px; }
.update svg { width: 4px; height: 16px; margin-left: auto; margin-right: 11px; }
.bookmarks { display: flex; padding: 4px 0 0 13px; height: 32px; }
.bookmarks a { height: 20px; display: flex; align-items: center; gap: 8px; white-space: nowrap; }
.bookmarks i { font-style: normal; font-size: 10.800px; }
.bookmarks a:nth-child(1) { width: 152px; }
.bookmarks a:nth-child(2) { width: 139px; }
.bookmarks a:nth-child(3) { width: 77px; }
.bookmarks a:nth-child(4) { width: 134px; }
.bookmarks a:nth-child(5), .bookmarks a:nth-child(8) { width: 31px; }
.bookmarks a:nth-child(6) { width: 57px; }
.bookmarks a:nth-child(7) { width: 87px; }
.bookmarks a:nth-child(9) { width: 69px; }
.bookmarks a:nth-child(10) { width: 89px; }
.bookmarks a:nth-child(11) { width: 71px; }
.bookmarks a:nth-child(12) { width: 151px; }
.bookmarks a:nth-child(13) { width: 153px; }
.bookmarks a:nth-child(14) { width: 152px; }
.bookmarks a:nth-child(15) { width: 149px; }
.bookmarks a:nth-child(16) { width: 150px; }
.bookmarks a:nth-child(17) { width: 87px; }
.bookmarks a:nth-child(18) { width: 150px; }
.bookmarks a:nth-child(19) { width: 71px; }
.bookmarks a:nth-child(20) { width: 129px; }
.bookmarks a:nth-child(21) { width: 132px; }
.bookmarks a:nth-child(22) { width: 112px; }

/* Page frame */
.page { height: 1289px; flex: none; display: flex; background: #ecf0f5; overflow: hidden; }
.sidebar { width: 230px; background: #222d32; color: #b8c7ce; }
.brand { height: 50px; background: #008d4c; display: flex; align-items: center; color: #fff; font: 20px/48px "Liberation Sans", Arial, sans-serif; }
.brand svg { width: 96px; height: 50px; margin-left: 17px; }
.brand span { margin-left: 5px; height: 50px; }
.hp { font: bold 15.500px "Liberation Sans", Arial, sans-serif; fill: #232a63; stroke: #232a63; stroke-width: .5px; }
.user { display: flex; height: 84px; padding: 20px 0 0 10px; margin-bottom: 2px; }
.avatar { width: 45px; height: 45px; border-radius: 50%; background: #00a65a; color: #fff; text-align: center; line-height: 45px; margin-right: 15px; font-size: 12.500px; }
.name { font-weight: 700; font-size: 13px; line-height: 20px; margin-top: 3px; }
.links { display: flex; align-items: center; font-size: 9.800px; line-height: 16px; margin-top: 7px; font-weight: 300; }
.links span { letter-spacing: -0.100px; }
.links svg { width: 11px; height: 11px; margin-right: 2px; }
.links svg.so { margin-left: 10px; }
.sidebar nav a { display: flex; align-items: center; height: 44px; padding-left: 13px; border-left: 3px solid transparent; font-size: 13.300px; font-weight: 300; }
.sidebar nav a svg { width: 16px; height: 15px; margin-right: 13px; }
.sidebar nav a.current { height: 46px; background: #1e282c; border-color: #00a65a; color: #fff; border-left-width: 2px; padding-left: 14px; }
.main { width: 2313px; }
.topbar { height: 51px; background: #00a65a; color: #fff; display: flex; align-items: center; justify-content: space-between; padding: 0 15px; }
.burger { width: 13px; height: 12px; }
.logout { display: flex; align-items: center; gap: 4px; margin-top: -1px; font-weight: 300; font-size: 13.300px; }
.logout svg { width: 14px; height: 13px; }

/* Content */
.content { position: relative; padding: 35px 15px 0; }
.crumbs { position: absolute; right: 15px; top: 11px; font-size: 10.600px; line-height: 20px; color: #555; display: flex; font-weight: 300; }
.crumbs em { font-style: normal; color: #bbb; padding: 0 8px; }
.crumbs .last { color: #777; }
h1 { font-size: 28.600px; line-height: 33px; font-weight: 300; height: 33px; white-space: nowrap; }
h1 small { font-size: 13.500px; font-weight: 400; color: #777; margin-left: 3px; }
.back { display: flex; align-items: center; gap: 3px; margin-top: 19px; height: 20px; color: #5a86b8; font-weight: 300; }
.back svg { width: 8px; height: 8px; }
.column { width: 1512px; margin: 20px auto 0 386px; }
.alert { height: 91px; margin-bottom: 20px; background: #dd4b39; border-left: 5px solid #c23321; border-radius: 3px; color: #fff; padding: 15px; }
.alert h4 { font-size: 15.700px; font-weight: 700; line-height: 20px; margin: -1px 0 12px; }
.alert ul { padding-left: 39px; line-height: 20px; font-weight: 300; }
.card { display: block; height: 1100px; background: #fff; border-radius: 3px 3px 0 0; padding: 22px 26px; }
.group { margin-bottom: 15px; }
label { display: block; font-weight: 700; height: 20px; margin-bottom: 6px; font-size: 13.300px; }
.error { margin-bottom: 27px; }
.error label { color: #dd4b39; }
.field { height: 34px; border: 1px solid #c4c6c9; padding: 0 0 0 12px; display: flex; align-items: center; color: #666; font-weight: 300; font-size: 12.400px; }
.error .field { border-color: #dd4b39; font-size: 12.500px; padding-left: 11px; }
.addon { margin-left: auto; width: 39px; height: 32px; border-left: 1px solid #dd4b39; display: flex; align-items: center; padding-left: 11px; }
.addon svg { width: 14px; height: 16px; }
.help { color: #dd4b39; font-weight: 300; margin-top: 5px; height: 20px; }
.tz { padding-left: 11px; }
.tz span { margin-top: -8px; }
.caret { margin-left: auto; margin-right: 11px; border: 4px solid transparent; border-top: 5px solid #888; border-bottom: 0; }
.status { border-color: #d2d6de; padding-left: 15px; }
.status svg { width: 9px; height: 8px; margin-left: auto; margin-right: 5px; }
.multi { padding-left: 6px; }
.tag { width: 38px; height: 22px; border: 1px solid #c6c6c6; border-radius: 4px; line-height: 20px; padding-left: 6px; white-space: nowrap; display: flex; gap: 4px; }
.tag b { font: bold 11px/20px "Liberation Sans", sans-serif; color: #888; }
sup { color: #f00; font-size: 12.500px; line-height: 0; vertical-align: 1px; }
.h { margin-bottom: 7px; }
.check { display: flex; align-items: flex-start; height: 20px; line-height: 20px; white-space: nowrap; }
.check input { margin: 3px 7px 0 0; width: 13px; height: 13px; }
.check .hovered { accent-color: #005cc8; }
.all { margin-top: 17px; }
.cols { margin-top: 12px; }
.h.groups { margin-bottom: 0; }
.h.cols { margin-bottom: 16px; }
.grid { display: grid; grid-template-columns: 496px 497px 400px; grid-auto-rows: 41.420px; }
.scrollbar { width: 17px; background: #f1f1f1; display: flex; flex-direction: column; align-items: center; padding: 7px 0 6px; }
.scrollbar i { border: 4px solid transparent; }
.scrollbar .up { border-bottom-color: #a3a3a3; border-top: 0; margin-bottom: 6px; }
.scrollbar .down { border-top-color: #505050; border-bottom: 0; margin-top: auto; }
.thumb { width: 13px; height: 825px; background: #c1c1c1; }

/* Taskbar */
.taskbar { height: 48px; flex: none; border-top: 1px solid #c6d2e6; background: linear-gradient(90deg, #e2eefa 0, #e0edfa 300px, #d0e4fb 640px, #d8dff4 850px, #d4e0f7 1150px, #dadff4 1600px, #d9e2f5 2000px, #e2eef9 2320px, #e2eef9 100%); font: 11.600px/16px "Open Sans", "Noto Sans", sans-serif; color: #1b1b1b; display: flex; }
.weather { display: flex; align-items: center; gap: 9px; padding-left: 22px; width: 952px; font-size: 11px; }
.weather svg { width: 20px; height: 20px; }
.weather span { color: #5a5f66; }
.apps { display: flex; gap: 4px; padding-top: 3px; }
.app { width: 40px; height: 42px; border-radius: 4px; position: relative; padding: 9px 8px 0; }
.app svg { width: 24px; height: 23px; }
.run::after { content: ""; position: absolute; left: 17px; bottom: 1px; width: 6px; height: 3px; border-radius: 2px; background: #7c828c; }
.alerted { background: #fbe3e6; }
.alerted::after { background: #c42b1c; }
.open { background: #eef1fb; }
.open::after { left: 12px; width: 16px; background: #0078d4; }
.app .mail { position: absolute; width: 15px; height: 15px; right: 3px; top: 3px; }
.app .ok { position: absolute; width: 12px; height: 12px; right: 4px; top: 7px; }
.tray { flex: 1; display: flex; align-items: center; justify-content: flex-end; padding-right: 20px; }
.chev { width: 12px; height: 8px; margin-right: 17px; }
.lang { margin-right: 19px; font-size: 11.300px; }
.sys { width: 16px; height: 14px; margin-right: 8px; }
.clock { text-align: right; margin: 0 8px 0 9px; width: 48px; white-space: nowrap; font-size: 11.400px; letter-spacing: -0.100px; }
.count { width: 16px; height: 16px; border-radius: 50%; background: #0078d4; color: #fff; text-align: center; font-size: 10px; }
```
